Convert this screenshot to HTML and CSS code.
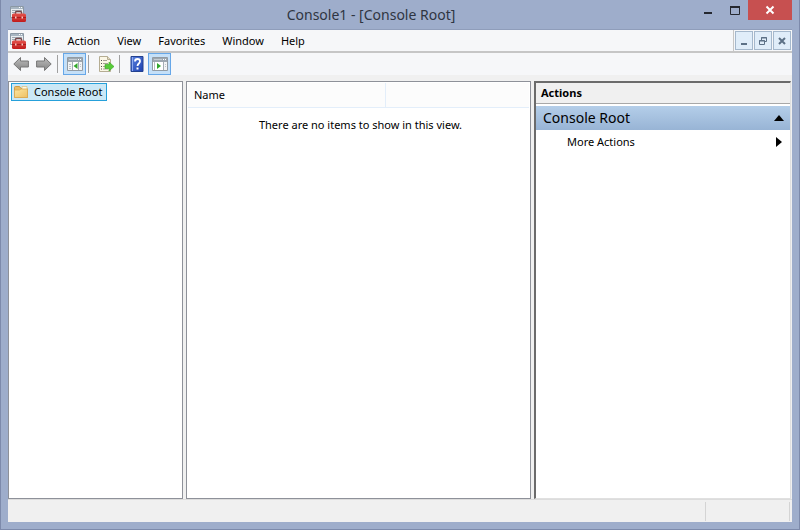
FILE: index.html
```
<!DOCTYPE html>
<html lang="en">
<head>
<meta charset="utf-8">
<title>Console1 - [Console Root]</title>
<link rel="stylesheet" href="styles.css">
</head>
<body>
<svg class="defs" aria-hidden="true">
  <defs>
    <linearGradient id="arrow-fill" x1="0" y1="0" x2="0" y2="1"><stop offset="0" stop-color="#bcbcbc"/><stop offset="1" stop-color="#858585"/></linearGradient>
    <linearGradient id="red-fill" x1="0" y1="0" x2="0" y2="1"><stop offset="0" stop-color="#e5534c"/><stop offset="1" stop-color="#c01b1b"/></linearGradient>
    <linearGradient id="folder-fill" x1="0" y1="0" x2="1" y2="1"><stop offset="0" stop-color="#fbe6a2"/><stop offset="1" stop-color="#eec063"/></linearGradient>
    <linearGradient id="help-fill" x1="0" y1="0" x2="1" y2="1"><stop offset="0" stop-color="#5b83e0"/><stop offset="1" stop-color="#1c3fae"/></linearGradient>
    <symbol id="toolbox" viewBox="0 0 16 16">
      <path d="M.5.5h13v11H.5z" fill="#e9edf0" stroke="#8b98a4"/>
      <path d="M1 1h12v2H1z" fill="#a8b6c2"/>
      <path d="M9 1.5h1M11 1.5h1" stroke="#fff"/>
      <path d="M2 4.500h10M2 6.500h3M2 8.500h2" stroke="#9da8b1"/>
      <path d="M5.500 8.500v-2q0-1 1-1h4q1 0 1 1v2" fill="none" stroke="#77484a" stroke-width="1.500"/>
      <path d="M2 9q0-1.500 1.500-1.500h10.500q2 0 2 1.500v5.500q0 1.500-1.500 1.500h-11q-1.500 0-1.500-1.500z" fill="url(#red-fill)"/>
      <path d="M2 11.500h14" stroke="#a91c1c"/>
      <path d="M5 10.500h1.500v2H5zM11.500 10.500H13v2h-1.500z" fill="#f7c7c0"/>
    </symbol>
    <symbol id="arrow" viewBox="0 0 16 16">
      <path d="M.8 8 7.500 1.500V5H15.400v6H7.500v3.500z" fill="url(#arrow-fill)" stroke="#777" stroke-linejoin="round"/>
    </symbol>
    <symbol id="pane" viewBox="0 0 16 16">
      <path d="M.5 1.500h15v13H.5z" fill="#f3f4f5" stroke="#929ba3"/>
      <path d="M1 2h14v4H1z" fill="#9da7b0"/>
      <path d="M2 3.500h8" stroke="#c5ccd2"/>
      <path d="M11 3.500h1M13 3.500h1" stroke="#fff"/>
      <path d="M5.500 6v8M11.500 6v8" stroke="#a4acb4"/>
      <path d="M2 8.500h2M2 10.500h2M2 12.500h2M13 8.500h1M13 10.500h1" stroke="#bdc4ca"/>
    </symbol>
  </defs>
</svg>
<div class="window">
  <header class="titlebar">
    <svg class="icon"><use href="#toolbox"/></svg>
    <h1>Console1 - [Console Root]</h1>
    <div class="caption">
      <button aria-label="Minimize"><svg width="10" height="12"><path d="M1 9h8" stroke="#252830" stroke-width="2"/></svg></button>
      <button aria-label="Maximize"><svg width="12" height="12"><path d="M1.500 3h9v7.500h-9z" fill="none" stroke="#252830"/><path d="M1 3h10" stroke="#252830" stroke-width="2"/></svg></button>
      <button class="close" aria-label="Close"><svg width="10" height="10"><path d="m1.500 1.500 7 7m0-7-7 7" stroke="#fff" stroke-width="2"/></svg></button>
    </div>
  </header>
  <div class="client">
    <nav class="menubar">
      <svg class="icon"><use href="#toolbox"/></svg>
      <button>File</button><button>Action</button><button>View</button><button>Favorites</button><button>Window</button><button>Help</button>
      <div class="mdi">
        <button aria-label="Minimize child"><svg width="10" height="10"><path d="M2 8h6" stroke="#5d7186" stroke-width="2"/></svg></button>
        <button aria-label="Restore child"><svg width="10" height="10"><path d="M3.500 4V1.500h5v4H7M3 2h6" fill="none" stroke="#5d7186"/><path d="M1.500 4.500h5v4h-5zM1 5h6" fill="none" stroke="#5d7186"/></svg></button>
        <button aria-label="Close child"><svg width="10" height="10"><path d="m2 2 6 6m0-6-6 6" stroke="#5d7186" stroke-width="2"/></svg></button>
      </div>
    </nav>
    <div class="toolbar">
      <button aria-label="Back"><svg class="icon"><use href="#arrow"/></svg></button>
      <button aria-label="Forward"><svg class="icon flip"><use href="#arrow"/></svg></button>
      <i class="sep"></i>
      <button class="on" aria-label="Show console tree" aria-pressed="true"><svg class="icon"><use href="#pane"/><path d="M6 6h5v8H6z" fill="#fff"/><path d="M10.500 7v6L6.500 10z" fill="#31a82b"/></svg></button>
      <i class="sep"></i>
      <button aria-label="Export list"><svg class="icon" viewBox="0 0 16 16"><path d="M1.500.5h8l3 3v12h-11z" fill="#fbf7e6" stroke="#b5ad93"/><path d="M9.500.5v3h3" fill="#e4dcc2" stroke="#b5ad93"/><path d="M3 4.500h1M3 7.500h1M3 10.500h1M3 13h1" stroke="#525252"/><path d="M5 4.500h4M5 7.500h5M5 10.500h3M5 13h5" stroke="#a7a296"/><path d="M7 8.500h4V6l5 4.500-5 4.500v-2.500H7z" fill="#57cb38" stroke="#38a423" stroke-width=".6"/></svg></button>
      <i class="sep"></i>
      <button aria-label="Help"><svg class="icon" viewBox="0 0 16 16"><path d="M2 .5h12v15H2z" fill="url(#help-fill)" stroke="#23418f"/><path d="M3.500 1v14" stroke="#8eaaf0"/><path d="M6 5.500Q6 3 8.500 3T11 5.300C11 7.500 8.500 7.500 8.500 10" fill="none" stroke="#fff" stroke-width="1.800"/><path d="M7.500 11.500h2v2h-2z" fill="#fff"/></svg></button>
      <button class="on" aria-label="Show action pane" aria-pressed="true"><svg class="icon"><use href="#pane"/><path d="M1 6h10v8H1z" fill="#fff"/><path d="M5 7v6l4-3z" fill="#31a82b"/><path d="M2.500 6v8" stroke="#b6bec5"/></svg></button>
    </div>
    <main class="panes">
      <section class="pane tree">
        <button class="node"><svg class="icon" viewBox="0 0 16 16"><path d="M1.500 13.500v-10q0-1 1-1h4l1.500 2h5.500q1 0 1 1v8z" fill="#e9bd65" stroke="#cf9b45"/><path d="M9 2.500h5v3H9z" fill="#fff8df" stroke="#d8b56b" stroke-width=".6"/><path d="M1.500 6h5l1.500-1h6.500v8q0 .500-.500.500H2q-.500 0-.500-.500z" fill="url(#folder-fill)" stroke="#d9aa55" stroke-width=".8"/></svg>Console Root</button>
      </section>
      <section class="pane list">
        <table>
          <thead><tr><th class="name">Name</th><th></th></tr></thead>
          <tbody><tr><td colspan="2">There are no items to show in this view.</td></tr></tbody>
        </table>
      </section>
      <aside class="pane actions">
        <h2>Actions</h2>
        <button class="group">Console Root<svg width="10" height="6"><path d="M0 6 5 0l5 6z"/></svg></button>
        <button class="more">More Actions<svg width="6" height="10"><path d="m0 0 6 5-6 5z"/></svg></button>
      </aside>
    </main>
    <footer class="status"><span></span><span></span></footer>
  </div>
</div>
</body>
</html>
```
FILE: styles.css
```
* { box-sizing: border-box; }
body { margin: 0; font: 11px/16px "Noto Sans", "Open Sans", sans-serif; color: #000; }
button { font: inherit; color: inherit; background: none; border: 0; padding: 0; margin: 0; }
svg { display: block; flex: none; }
.defs { position: absolute; width: 0; height: 0; }
.icon { width: 16px; height: 16px; }
.flip { transform: scaleX(-1); }

.window {
  display: flex; flex-direction: column; min-height: 100vh;
  padding: 0 7px 7px; background: #9eadcb;
  border: solid #7d8aab; border-width: 0 1px 1px;
}
.titlebar { display: grid; grid-template-columns: 40px 1fr auto; height: 29px; }
.titlebar > .icon { margin: 6px 2px; }
.titlebar h1 { margin: 0; font-size: 14px; font-weight: 400; line-height: 30px; text-align: center; color: #2f3542; }
.caption { display: flex; justify-content: flex-end; }
.caption button { display: flex; align-items: center; justify-content: center; width: 27px; height: 20px; }
.caption .close { width: 44px; background: #c75050; }

.client { flex: 1; display: flex; flex-direction: column; background: #f0f0f0; border: 1px solid #8f9dba; border-width: 1px 0 0; }
.menubar { display: flex; align-items: center; gap: 17px; height: 23px; padding-left: 2px; background: #f6f7f9; border-bottom: 2px solid #c6c6c6; }
.menubar > .icon { margin-right: -10px; }
.mdi { display: flex; gap: 1px; margin-left: auto; padding: 1px; align-self: stretch; border-left: 1px solid #c6c6c6; }
.mdi button { display: flex; align-items: center; justify-content: center; width: 18px; background: #e0edf9; border: 1px solid #a5b8cc; }

.toolbar { display: flex; align-items: center; height: 22px; padding-left: 1px; background: #f6f7f9; }
.toolbar button { display: flex; align-items: center; justify-content: center; width: 23px; height: 22px; }
.toolbar .on { background: #c5e0f8; border: 1px solid #66a7e8; }
.toolbar .sep { width: 1px; height: 18px; margin: 0 5px 0 2px; background: #a0a0a0; }

.panes { flex: 1; display: flex; gap: 3px; padding: 6px 1px 0 0; }
.pane { background: #fff; border: 1px solid #8e9199; }
.tree { width: 175px; padding: 1px 2px; }
.node { display: flex; align-items: center; gap: 5px; height: 18px; padding: 0 4px 0 1px; background: #cbe8f6; border: 1px solid #26a0da; }
.list { flex: 1; padding: 1px; }
.list table { width: 100%; border-collapse: collapse; }
.list th { height: 24px; padding: 0 6px; font-weight: 400; text-align: left; background: #fcfcfc; border-bottom: 1px solid #e3eefa; }
.list .name { width: 197px; border-right: 1px solid #e3eefa; }
.list td { padding: 9px 0 0 4px; text-align: center; }
.actions { width: 257px; border-width: 2px 1px 1px 2px; border-color: #6b6b6b #e0e0e0 #e0e0e0 #6b6b6b; }
.actions h2 { margin: 0; padding-left: 5px; font-size: 11px; line-height: 20px; background: #f0f0f0; border-bottom: 1px solid #a8a8a8; }
.actions button { display: flex; align-items: center; justify-content: space-between; width: 100%; }
.actions .group { height: 24px; margin-top: 2px; padding: 0 6px 0 7px; font-size: 14px; background: linear-gradient(#b4cee9, #98b4d5); }
.actions .more { height: 24px; padding: 0 8px 0 31px; }

.status { display: flex; justify-content: flex-end; height: 23px; padding: 2px 2px 1px; border-top: 1px solid #dcdcdc; }
.status span { width: 84px; border-right: 1px solid #d4d4d4; }
.status span:first-child { width: 0; }
```
